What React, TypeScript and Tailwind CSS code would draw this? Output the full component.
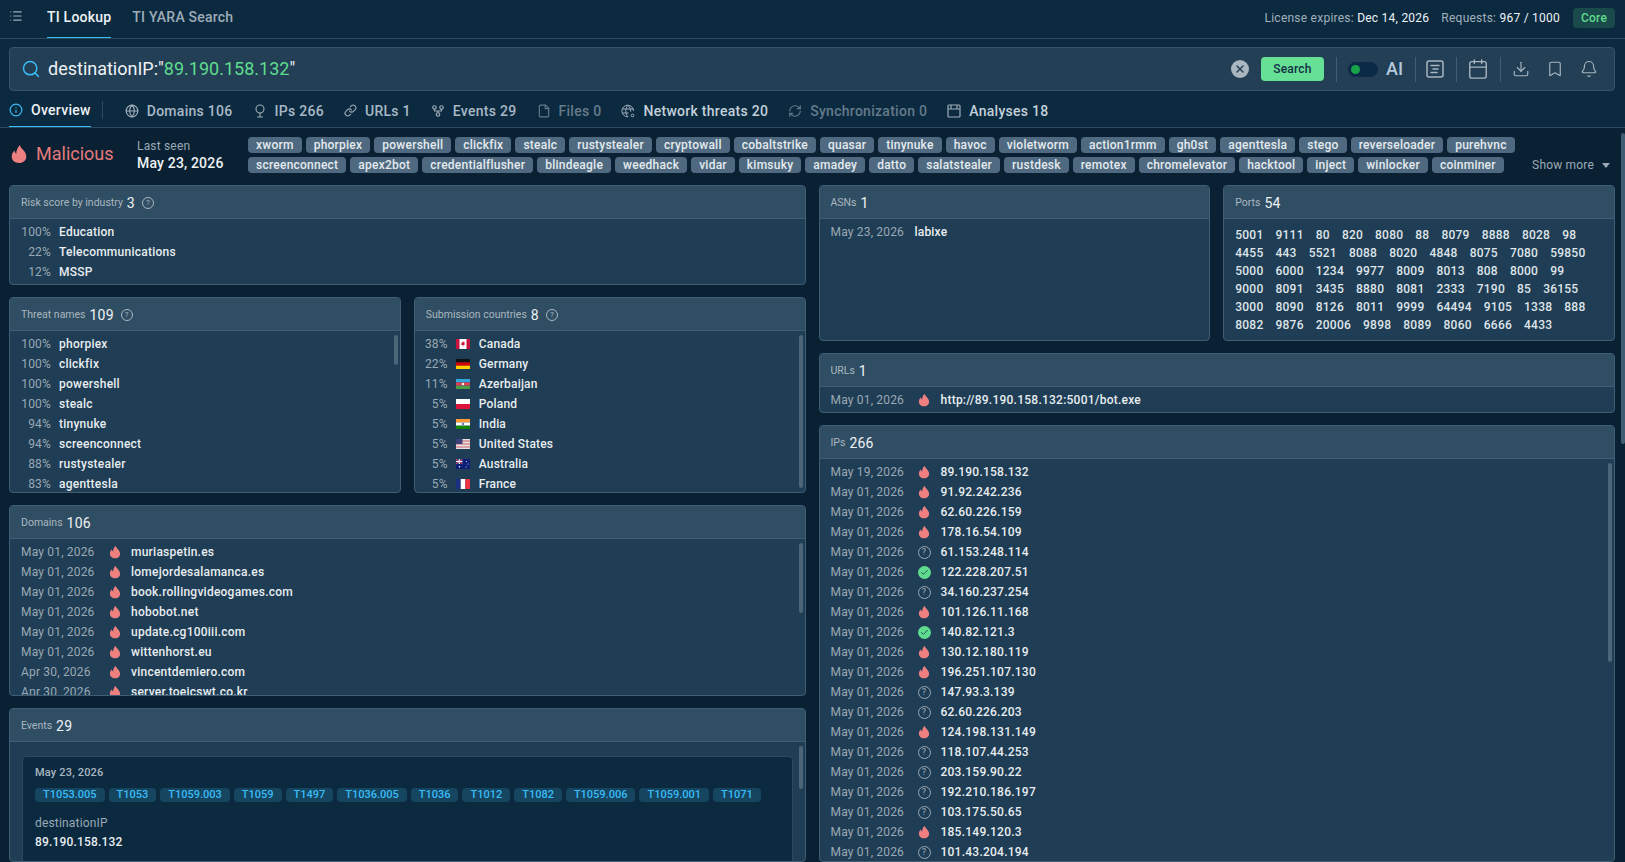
import { Info, Globe, Link, GitFork, File, RefreshCw, Search, X, Download, Bookmark, Bell, Calendar, Check, List } from "lucide-react";
import type { ReactNode } from "react";

const tagsA = ["xworm", "phorpiex", "powershell", "clickfix", "stealc", "rustystealer", "cryptowall", "cobaltstrike", "quasar", "tinynuke", "havoc", "violetworm", "action1rmm", "gh0st", "agenttesla", "stego", "reverseloader", "purehvnc"];
const tagsB = ["screenconnect", "apex2bot", "credentialflusher", "blindeagle", "weedhack", "vidar", "kimsuky", "amadey", "datto", "salatstealer", "rustdesk", "remotex", "chromelevator", "hacktool", "inject", "winlocker", "coinminer"];
const threats = [["100%", "phorpiex"], ["100%", "clickfix"], ["100%", "powershell"], ["100%", "stealc"], ["94%", "tinynuke"], ["94%", "screenconnect"], ["88%", "rustystealer"], ["83%", "agenttesla"]];
const domains = [["May 01, 2026", "muriaspetin.es"], ["May 01, 2026", "lomejordesalamanca.es"], ["May 01, 2026", "book.rollingvideogames.com"], ["May 01, 2026", "hobobot.net"], ["May 01, 2026", "update.cg100iii.com"], ["May 01, 2026", "wittenhorst.eu"], ["Apr 30, 2026", "vincentdemiero.com"], ["Apr 30, 2026", "server.toeicswt.co.kr"]];
const techniques = ["T1053.005", "T1053", "T1059.003", "T1059", "T1497", "T1036.005", "T1036", "T1012", "T1082", "T1059.006", "T1059.001", "T1071"];
const ports = [
  ["5001", "9111", "80", "820", "8080", "88", "8079", "8888", "8028", "98"],
  ["4455", "443", "5521", "8088", "8020", "4848", "8075", "7080", "59850"],
  ["5000", "6000", "1234", "9977", "8009", "8013", "808", "8000", "99"],
  ["9000", "8091", "3435", "8880", "8081", "2333", "7190", "85", "36155"],
  ["3000", "8090", "8126", "8011", "9999", "64494", "9105", "1338", "888"],
  ["8082", "9876", "20006", "9898", "8089", "8060", "6666", "4433"],
];
const ips: [string, string, "bad" | "unknown" | "ok"][] = [
  ["May 19, 2026", "89.190.158.132", "bad"], ["May 01, 2026", "91.92.242.236", "bad"], ["May 01, 2026", "62.60.226.159", "bad"], ["May 01, 2026", "178.16.54.109", "bad"],
  ["May 01, 2026", "61.153.248.114", "unknown"], ["May 01, 2026", "122.228.207.51", "ok"], ["May 01, 2026", "34.160.237.254", "unknown"], ["May 01, 2026", "101.126.11.168", "bad"],
  ["May 01, 2026", "140.82.121.3", "ok"], ["May 01, 2026", "130.12.180.119", "bad"], ["May 01, 2026", "196.251.107.130", "bad"], ["May 01, 2026", "147.93.3.139", "unknown"],
  ["May 01, 2026", "62.60.226.203", "unknown"], ["May 01, 2026", "124.198.131.149", "bad"], ["May 01, 2026", "118.107.44.253", "unknown"], ["May 01, 2026", "203.159.90.22", "unknown"],
  ["May 01, 2026", "192.210.186.197", "unknown"], ["May 01, 2026", "103.175.50.65", "unknown"], ["May 01, 2026", "185.149.120.3", "bad"], ["May 01, 2026", "101.43.204.194", "unknown"],
];

function Flame({ size = 14 }: { size?: number }) {
  return (
    <svg width={size} height={size} viewBox="0 0 14 14" className="shrink-0">
      <path d="M7.600 .7c.3 2.400 4.500 4.200 4.500 8C12.100 11.500 9.900 13.300 7 13.300S1.900 11.500 1.900 8.800c0-1.800.8-3.100 2-4.200.1 1 .5 1.800 1.200 2.200C4.900 4.700 6 2.400 7.600.7z" fill="#ee8080" />
    </svg>
  );
}

function Unknown() {
  return (
    <span className="flex h-[13px] w-[13px] shrink-0 items-center justify-center rounded-full border border-[#9aa9b5] text-[9px] leading-none text-[#9aa9b5]">?</span>
  );
}

function Safe() {
  return (
    <span className="flex h-[13px] w-[13px] shrink-0 items-center justify-center rounded-full bg-[#5fdc8d]">
      <Check size={9} strokeWidth={2} className="text-[#143047]" />
    </span>
  );
}

function Flag({ children }: { children: ReactNode }) {
  return (
    <svg width="14" height="10" viewBox="0 0 14 10" className="shrink-0">
      {children}
    </svg>
  );
}

const countries: [string, string, ReactNode][] = [
  ["38%", "Canada", <><rect width="14" height="10" fill="#fff" /><rect width="3.500" height="10" fill="#c8143c" /><rect x="10.500" width="3.500" height="10" fill="#c8143c" /><path d="M7 2l.7 1.300 1-.3-.3 1.500.8.500L8 6h-.7v1.500h-.6V6H6l-1.200-.5.800-.5-.3-1.500 1 .3z" fill="#c8143c" /></>],
  ["22%", "Germany", <><rect width="14" height="3.400" fill="#111" /><rect y="3.400" width="14" height="3.300" fill="#d80000" /><rect y="6.700" width="14" height="3.300" fill="#ffce00" /></>],
  ["11%", "Azerbaijan", <><rect width="14" height="3.400" fill="#2fa8dc" /><rect y="3.400" width="14" height="3.300" fill="#e0405a" /><rect y="6.700" width="14" height="3.300" fill="#4a9e44" /><circle cx="7" cy="5" r="1.200" fill="#fff" /></>],
  ["5%", "Poland", <><rect width="14" height="5" fill="#fff" /><rect y="5" width="14" height="5" fill="#dc143c" /></>],
  ["5%", "India", <><rect width="14" height="3.400" fill="#ff9933" /><rect y="3.400" width="14" height="3.300" fill="#fff" /><rect y="6.700" width="14" height="3.300" fill="#138808" /><circle cx="7" cy="5" r="1.200" fill="#6a78b8" /></>],
  ["5%", "United States", <><rect width="14" height="10" fill="#e8e0e0" /><rect y="1.500" width="14" height="1" fill="#c8606c" /><rect y="4.500" width="14" height="1" fill="#c8606c" /><rect y="7.500" width="14" height="1" fill="#c8606c" /><rect width="6.500" height="5" fill="#3c3f78" /></>],
  ["5%", "Australia", <><rect width="14" height="10" fill="#0a1f78" /><rect width="6.500" height="5" fill="#3a3f80" /><path d="M0 0l6.500 5M6.500 0L0 5" stroke="#e04050" strokeWidth="1" /><path d="M3.250 0v5M0 2.500h6.500" stroke="#fff" strokeWidth="1" /><circle cx="3.500" cy="7.800" r=".8" fill="#fff" /><circle cx="10.500" cy="2.500" r=".5" fill="#fff" /><circle cx="12" cy="5" r=".5" fill="#fff" /><circle cx="10" cy="8" r=".5" fill="#fff" /></>],
  ["5%", "France", <><rect width="4.700" height="10" fill="#1a2f80" /><rect x="4.700" width="4.700" height="10" fill="#fff" /><rect x="9.400" width="4.600" height="10" fill="#ef3340" /></>],
];

function Card({ title, count, help, className, children }: { title: string; count: number; help?: boolean; className?: string; children: ReactNode }) {
  return (
    <section className={`flex flex-col overflow-hidden rounded border border-[#3f5d73] bg-[#1f3d54] ${className ?? ""}`}>
      <header className="flex h-[33px] shrink-0 items-center border-b border-[#3f5d73] bg-[#304e63] px-[11px] pt-[2px]">
        <span className="text-[10.5px] tracking-normal text-[#a9b6c0]">{title}</span>
        <span className="ml-1 text-[14px] text-[#eef2f5]">{count}</span>
        {help && (
          <span className="ml-[7px] flex h-3 w-3 items-center justify-center rounded-full border border-[#a9b6c0] text-[8px] leading-none text-[#a9b6c0]">?</span>
        )}
      </header>
      <div className="relative min-h-0 flex-1 overflow-hidden">{children}</div>
    </section>
  );
}

function Thumb({ className }: { className: string }) {
  return <span className={`absolute right-[2px] w-[4px] rounded-full bg-[#4b6579] ${className}`} />;
}

function DateRow({ date, value, icon }: { date: string; value: string; icon: ReactNode }) {
  return (
    <div className="flex h-5 items-center pl-[11px]">
      <span className="w-[86px] shrink-0 text-[#9aa9b5]">{date}</span>
      <span className="flex w-[15px] justify-center">{icon}</span>
      <span className="ml-[9px] font-medium tracking-[0.02em] text-[#e8edf1]">{value}</span>
    </div>
  );
}

function PctRow({ pct, name }: { pct: string; name: string }) {
  return (
    <div className="flex h-5 items-center pl-[11px]">
      <span className="w-[30px] shrink-0 text-right text-[#9aa9b5]">{pct}</span>
      <span className="ml-2 font-medium tracking-[0.02em] text-[#e8edf1]">{name}</span>
    </div>
  );
}

function NavTab({ icon, label, tone = "normal" }: { icon: ReactNode; label: string; tone?: "normal" | "dim" | "bright" }) {
  const text = tone === "dim" ? "text-[#647a8a]" : tone === "bright" ? "text-[#c3d0da]" : "text-[#a8b8c5]";
  return (
    <div className={`flex h-full items-center gap-2 pt-[3px] text-[14px] font-medium tracking-[0.02em] ${text}`}>
      <span className={tone === "dim" ? "text-[#647a8a]" : "text-[#9eacb7]"}>{icon}</span>
      {label}
    </div>
  );
}

function PinIcon() {
  return (
    <svg width="14" height="14" viewBox="0 0 14 14" fill="none" stroke="currentColor" strokeWidth="1.100" strokeLinecap="round">
      <circle cx="7" cy="5" r="4" />
      <path d="M7 9v4M4.500 13h5" />
    </svg>
  );
}

function ThreatIcon() {
  return (
    <svg width="14" height="14" viewBox="0 0 14 14" fill="none" stroke="currentColor" strokeWidth="1">
      <path d="M12.500 7A5.800 5.800 0 1 0 7 12.800M1.500 5h11M1.500 9h6M7 1.200c-3 3.500-3 8 0 11.600M7 1.200c1.800 2 2.700 4.200 2.800 6.500" />
      <circle cx="11.500" cy="11.500" r="1.300" />
    </svg>
  );
}

function PanelIcon() {
  return (
    <svg width="14" height="14" viewBox="0 0 14 14" fill="none" stroke="currentColor" strokeWidth="1.200">
      <rect x="1" y="1" width="12" height="12" rx="1" />
      <path d="M1 5h12M4 1v4M10 1v4" />
    </svg>
  );
}

export default function App() {
  return (
    <div className="relative flex h-screen flex-col overflow-hidden bg-[#0a2133] font-['Roboto',sans-serif] text-[12px] leading-5 tracking-[0.015em]">
      {/* Top bar */}
      <div className="flex h-[39px] shrink-0 items-stretch border-b border-[#2c4a5f] bg-[#0b2a40] pl-[9px] pr-[10px]">
        <List size={14} className="mt-[9px] text-[#9eacb7]" />
        <div className="ml-6 flex gap-[21px] text-[14px] font-medium tracking-[0.015em]">
          <div className="flex items-center border-b border-[#38bdf8] pb-1 text-[#eef2f5]">TI Lookup</div>
          <div className="flex items-center pb-1 text-[#9eacb7]">TI YARA Search</div>
        </div>
        <div className="ml-auto flex items-center pb-[3px] tracking-[0.02em] text-[#a2b0bb]">
          <span>License expires: <span className="text-[#eef2f5]">Dec 14, 2026</span></span>
          <span className="ml-3">Requests: <span className="text-[#eef2f5]">967 / 1000</span></span>
          <span className="ml-[13px] flex h-5 w-[42px] items-center justify-center rounded bg-[#1a4a4c] font-medium text-[#5fdc8d]">Core</span>
        </div>
      </div>

      {/* Search and tabs */}
      <div className="shrink-0 bg-[#0b2a40]">
        <div className="ml-[9px] mr-[10px] mt-2 flex h-[44px] items-center rounded border border-[#35536a] bg-[#223f55] pl-[11px] pr-4">
          <Search size={20} strokeWidth={1.800} className="text-[#38bdf8]" />
          <span className="ml-[7px] text-[18px] tracking-normal text-[#eef2f5]">
            destinationIP:"<span className="text-[#5fdc8d]">89.190.158.132</span>"
          </span>
          <span className="ml-auto flex h-[18px] w-[18px] items-center justify-center rounded-full bg-[#a9b6c0]">
            <X size={12} strokeWidth={3} className="text-[#223f55]" />
          </span>
          <button className="ml-3 h-6 w-[63px] rounded bg-[#66e094] font-medium text-[#143047]">Search</button>
          <div className="ml-3 h-[25px] w-px bg-[#3f5d73]" />
          <span className="ml-[11px] flex h-[15px] w-[30px] items-center rounded-full bg-[#0b2a47] pl-[3px]">
            <span className="h-[9px] w-[9px] rounded-full bg-[#16a34a]" />
          </span>
          <span className="ml-2 text-[18px] font-medium tracking-normal text-[#b4c8dc]">AI</span>
          <div className="ml-3 h-[25px] w-px bg-[#3f5d73]" />
          <svg width="18" height="18" viewBox="0 0 18 18" fill="none" stroke="#a9b6c0" strokeWidth="1.500" strokeLinecap="round" className="ml-[10px]">
            <rect x="1" y="1" width="16" height="16" rx="2" />
            <path d="M5 5.500h8M7 9h5M5 12.500h6" />
          </svg>
          <div className="ml-3 h-[25px] w-px bg-[#3f5d73]" />
          <Calendar size={22} strokeWidth={1.500} className="ml-[10px] text-[#a9b6c0]" />
          <div className="ml-[11px] h-[25px] w-px bg-[#3f5d73]" />
          <Download size={18} strokeWidth={1.500} className="ml-[11px] text-[#a9b6c0]" />
          <Bookmark size={18} strokeWidth={1.500} className="ml-4 text-[#a9b6c0]" />
          <Bell size={18} strokeWidth={1.500} className="ml-4 text-[#a9b6c0]" />
        </div>
        <div className="flex h-[37px] items-stretch gap-5 border-b border-[#2c4a5f] pl-[9px]">
          <div className="flex items-center gap-2 border-b border-[#38bdf8] pt-[3px] text-[14px] font-medium tracking-[0.02em] text-[#eef2f5]">
            <Info size={14} className="text-[#38bdf8]" />
            Overview
          </div>
          <div className="-ml-[9px] mr-[2px] mb-[8px] mt-[10px] w-px bg-[#2c4a5f]" />
          <NavTab icon={<Globe size={14} />} label="Domains 106" />
          <NavTab icon={<PinIcon />} label="IPs 266" />
          <NavTab icon={<Link size={13} />} label="URLs 1" />
          <NavTab icon={<GitFork size={14} />} label="Events 29" />
          <NavTab tone="dim" icon={<File size={14} />} label="Files 0" />
          <NavTab tone="bright" icon={<ThreatIcon />} label="Network threats 20" />
          <NavTab tone="dim" icon={<RefreshCw size={14} />} label="Synchronization 0" />
          <NavTab tone="bright" icon={<PanelIcon />} label="Analyses 18" />
        </div>
      </div>

      {/* Verdict strip */}
      <div className="flex h-[57px] shrink-0 items-start pl-[9px] pr-[15px] pt-[9px]">
        <span className="mt-[7px]"><Flame size={20} /></span>
        <span className="ml-[7px] mt-[5px] w-[101px] text-[18px] leading-6 tracking-normal text-[#e57a7a]">Malicious</span>
        <div className="mt-px w-[111px] shrink-0 leading-4">
          <div className="text-[#9aa9b5]">Last seen</div>
          <div className="mt-px text-[14px] font-medium text-[#eef2f5]">May 23, 2026</div>
        </div>
        <div className="flex flex-col gap-1 tracking-[0.02em]">
          <div className="flex gap-1">
            {tagsA.map((t) => <span key={t} className="flex h-4 items-center rounded bg-[#4f6a80] px-2 font-medium text-[#e4eaef]">{t}</span>)}
          </div>
          <div className="flex gap-1">
            {tagsB.map((t) => <span key={t} className="flex h-4 items-center rounded bg-[#4f6a80] px-2 font-medium text-[#e4eaef]">{t}</span>)}
          </div>
        </div>
        <div className="ml-auto mt-[18px] flex items-center gap-2 whitespace-nowrap text-[#9aa9b5]">
          Show more
          <svg width="8" height="5" viewBox="0 0 8 5"><path d="M0 0h8L4 5z" fill="#9aa9b5" /></svg>
        </div>
      </div>

      {/* Panels */}
      <div className="grid min-h-0 flex-1 grid-cols-2 gap-[13px] pl-[9px] pr-[10px]">
        <div className="flex min-h-0 flex-col gap-3">
          <Card title="Risk score by industry" count={3} help className="h-[100px] shrink-0">
            <div className="py-[3px]">
              <PctRow pct="100%" name="Education" />
              <PctRow pct="22%" name="Telecommunications" />
              <PctRow pct="12%" name="MSSP" />
            </div>
          </Card>
          <div className="grid h-[196px] shrink-0 grid-cols-2 gap-[13px]">
            <Card title="Threat names" count={109} help>
              <div className="py-[3px]">
                {threats.map(([p, n]) => <PctRow key={n} pct={p} name={n} />)}
              </div>
              <Thumb className="top-1 h-[30px]" />
            </Card>
            <Card title="Submission countries" count={8} help>
              <div className="py-[3px]">
                {countries.map(([p, n, f]) => (
                  <div key={n} className="flex h-5 items-center">
                    <span className="w-[33px] shrink-0 text-right text-[#9aa9b5]">{p}</span>
                    <span className="ml-2"><Flag>{f}</Flag></span>
                    <span className="ml-[9px] font-medium text-[#e8edf1]">{n}</span>
                  </div>
                ))}
              </div>
              <Thumb className="top-1 bottom-1" />
            </Card>
          </div>
          <Card title="Domains" count={106} className="h-[191px] shrink-0">
            <div className="py-[3px]">
              {domains.map(([d, v]) => <DateRow key={v} date={d} value={v} icon={<Flame />} />)}
            </div>
            <Thumb className="top-1 h-[70px]" />
          </Card>
          <Card title="Events" count={29} className="min-h-0 flex-1">
            <div className="mx-3 mt-[14px] rounded border border-[#2c4a5f] bg-[#0b2a40] px-3 pt-2 pb-3">
              <div className="text-[11px] font-medium leading-4 text-[#a9b6c0]">May 23, 2026</div>
              <div className="mt-[7px] flex gap-1">
                {techniques.map((t) => (
                  <span key={t} className="flex h-[14px] items-center rounded bg-[#164560] px-2 text-[11px] font-medium tracking-normal text-[#38bdf8]">{t}</span>
                ))}
              </div>
              <div className="mt-[11px] text-[#9aa9b5]">destinationIP</div>
              <div className="-mt-px font-medium text-[#e8edf1]">89.190.158.132</div>
            </div>
            <Thumb className="top-1 h-[43px]" />
          </Card>
        </div>

        <div className="flex min-h-0 flex-col gap-3">
          <div className="grid h-[156px] shrink-0 grid-cols-2 gap-[13px]">
            <Card title="ASNs" count={1}>
              <div className="mt-[3px] flex h-5 items-center pl-[11px]">
                <span className="w-[84px] text-[#9aa9b5]">May 23, 2026</span>
                <span className="font-medium text-[#e8edf1]">labixe</span>
              </div>
            </Card>
            <Card title="Ports" count={54}>
              <div className="px-[11px] py-[7px]">
                {ports.map((row, i) => (
                  <div key={i} className="flex h-[18px] items-center gap-3 font-medium tracking-[0.02em] text-[#dfe5ea]">
                    {row.map((p) => <span key={p}>{p}</span>)}
                  </div>
                ))}
              </div>
            </Card>
          </div>
          <Card title="URLs" count={1} className="h-[60px] shrink-0">
            <div className="py-[3px]">
              <DateRow date="May 01, 2026" value="http://89.190.158.132:5001/bot.exe" icon={<Flame />} />
            </div>
          </Card>
          <Card title="IPs" count={266} className="min-h-0 flex-1">
            <div className="py-[3px]">
              {ips.map(([d, v, s]) => (
                <DateRow key={v} date={d} value={v} icon={s === "bad" ? <Flame /> : s === "ok" ? <Safe /> : <Unknown />} />
              ))}
            </div>
            <Thumb className="top-1 h-[199px]" />
          </Card>
        </div>
      </div>
      <span className="absolute right-0 top-[133px] h-[311px] w-1 rounded-full bg-[#3f5d73]" />
    </div>
  );
}
